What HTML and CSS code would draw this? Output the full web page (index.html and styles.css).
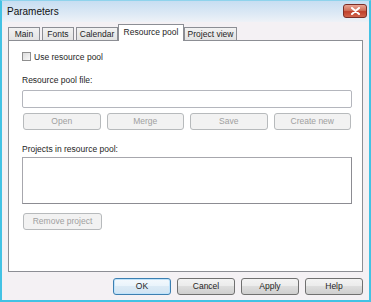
FILE: index.html
```html
<!DOCTYPE html>
<html lang="en">
<head>
    <meta charset="UTF-8">
    <title>Parameters</title>
    <link rel="stylesheet" href="styles.css">
</head>
<body>
    <div class="window">
        <div class="titlebar">
            <span class="title">Parameters</span>
            <span class="close">
                <svg width="11" height="8" viewBox="0 0 11 8">
                    <path d="M2 1 L9 7 M9 1 L2 7" stroke="#fff" stroke-width="2" stroke-linecap="round"/>
                </svg>
            </span>
        </div>
        <div class="tabs">
            <div class="tab t-main">Main</div>
            <div class="tab t-fonts">Fonts</div>
            <div class="tab t-cal">Calendar</div>
            <div class="tab active">Resource pool</div>
            <div class="tab t-view">Project view</div>
        </div>
        <div class="panel">
            <label class="check-row"><span class="checkbox"></span>Use resource pool</label>
            <div class="label file-label">Resource pool file:</div>
            <div class="input"></div>
            <div class="btn-row">
                <div class="btn disabled">Open</div>
                <div class="btn disabled">Merge</div>
                <div class="btn disabled">Save</div>
                <div class="btn disabled">Create new</div>
            </div>
            <div class="label projects-label">Projects in resource pool:</div>
            <div class="listbox"></div>
            <div class="btn disabled remove">Remove project</div>
        </div>
        <div class="footer">
            <div class="btn default">OK</div>
            <div class="btn">Cancel</div>
            <div class="btn">Apply</div>
            <div class="btn">Help</div>
        </div>
    </div>
</body>
</html>
```

FILE: styles.css
```css
body {
    margin: 0;
    font-family: "Liberation Sans", Arial, sans-serif;
    font-size: 8.5px;
    color: #1e1e1e;
}
.window {
    width: 371px;
    height: 302px;
    box-sizing: border-box;
    border: 2px solid #43c2e4;
    border-top: 1px solid #8fd3ec;
    background: #f4f1f4;
    display: flex;
    flex-direction: column;
}
.titlebar {
    height: 21px;
    display: flex;
    align-items: center;
    justify-content: space-between;
    padding: 0 2px 0 5px;
    background: linear-gradient(#c7def2, #dde9f5 60%, #eef2f7);
}
.title {
    font-size: 10px;
    color: #111;
}
.close {
    width: 22px;
    height: 12px;
    margin-top: -2px;
    display: flex;
    align-items: center;
    justify-content: center;
    border: 1px solid #7b2e27;
    border-radius: 3px;
    background: linear-gradient(#e9a493, #d0705b 45%, #c0402b 55%, #d1644c);
}
.tabs {
    display: flex;
    align-items: flex-end;
    height: 17px;
    padding-left: 6px;
    margin-top: 1px;
}
.tab {
    height: 13px;
    line-height: 13px;
    box-sizing: border-box;
    border: 1px solid #8c8e94;
    border-bottom: none;
    background: linear-gradient(#f2f2f2, #e3e3e3);
    margin-right: 2px;
    text-align: center;
}
.t-main { width: 32px; }
.t-fonts { width: 32px; }
.t-cal { width: 42px; margin-right: 0; }
.t-view { width: 53px; }
.tab.active {
    height: 17px;
    line-height: 14px;
    width: 66px;
    margin-right: 0;
    background: #fff;
    position: relative;
    top: 1px;
    z-index: 1;
}
.panel {
    margin: 0 6px;
    height: 232px;
    box-sizing: border-box;
    border: 1px solid #8c8e94;
    background: #fff;
    padding: 11px 10px 0 13px;
    display: flex;
    flex-direction: column;
}
.check-row {
    display: flex;
    align-items: center;
    height: 9px;
    gap: 3px;
}
.checkbox {
    width: 9px;
    height: 9px;
    box-sizing: border-box;
    border: 1px solid #8f8f8f;
    background: linear-gradient(135deg, #dcdcdc, #f8f8f8);
}
.label {
    height: 11px;
    line-height: 11px;
}
.file-label { margin-top: 14px; }
.input {
    margin-top: 4px;
    height: 18px;
    box-sizing: border-box;
    border: 1px solid #b4b6bd;
    border-radius: 2px;
}
.btn-row {
    display: grid;
    grid-template-columns: repeat(4, 1fr);
    gap: 6px;
    margin-top: 5px;
    padding: 0 1px;
}
.btn {
    height: 17px;
    line-height: 15px;
    box-sizing: border-box;
    border: 1px solid #707070;
    border-radius: 3px;
    text-align: center;
    background: linear-gradient(#f3f3f3, #ebebeb 50%, #dddddd 50%, #cfcfcf);
}
.btn.disabled {
    color: #a0a0a0;
    border-color: #b7babc;
    background: #f2f2f2;
}
.projects-label { margin-top: 14px; }
.listbox {
    margin-top: 2px;
    height: 47px;
    box-sizing: border-box;
    border: 1px solid #a7a7ad;
    border-right-color: #8c8c92;
    border-bottom-color: #8c8c92;
}
.remove {
    width: 79px;
    margin: 9px 0 0 1px;
}
.footer {
    display: flex;
    justify-content: flex-end;
    gap: 6px;
    padding: 6px 6px 0 0;
}
.footer .btn {
    width: 58px;
}
.btn.default {
    border-color: #3c7fb1;
    background: linear-gradient(#f4f9fd, #e8f3fb 50%, #dbeaf5 50%, #d0e4f3);
    box-shadow: inset 0 0 0 1px #bfe3fb;
}
```
